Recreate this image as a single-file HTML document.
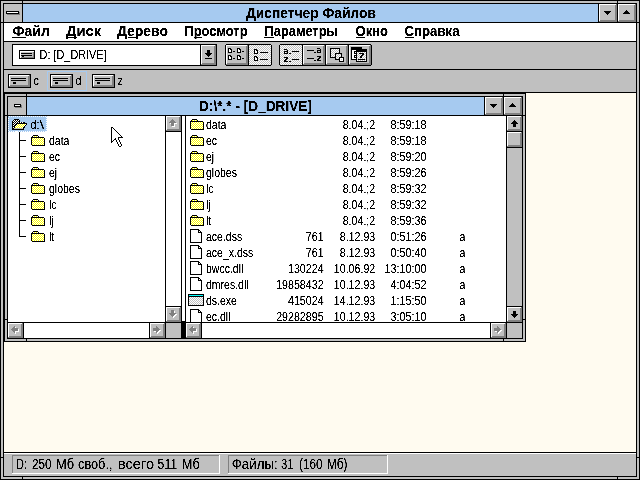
<!DOCTYPE html>
<html lang="ru"><head><meta charset="utf-8"><title>Диспетчер Файлов</title>
<style>
html,body{margin:0;padding:0;background:#000;overflow:hidden}
svg{display:block;will-change:transform;font-family:"Liberation Sans",sans-serif}
</style></head><body>
<svg width="640" height="480" viewBox="0 0 640 480" shape-rendering="crispEdges">
<defs>
<pattern id="dg" width="2" height="2" patternUnits="userSpaceOnUse"><rect width="2" height="2" fill="#FFF"/><rect width="1" height="1" fill="#C0C0C0"/><rect x="1" y="1" width="1" height="1" fill="#C0C0C0"/></pattern>
<pattern id="dy" width="2" height="2" patternUnits="userSpaceOnUse"><rect width="2" height="2" fill="#FFF"/><rect width="1" height="1" fill="#FFFF00"/><rect x="1" y="1" width="1" height="1" fill="#FFFF00"/></pattern>
<filter id="th" x="0" y="0" width="640" height="480" filterUnits="userSpaceOnUse" color-interpolation-filters="sRGB"><feComponentTransfer><feFuncA type="linear" slope="4" intercept="-1.2"/></feComponentTransfer></filter>
</defs>
<rect x="0" y="0" width="640" height="480" fill="#000"/>
<rect x="1" y="1" width="638" height="478" fill="#C0C0C0"/>
<rect x="3" y="3" width="634" height="474" fill="#000"/>
<rect x="22" y="1" width="1" height="2" fill="#000"/>
<rect x="22" y="477" width="1" height="2" fill="#000"/>
<rect x="617" y="1" width="1" height="2" fill="#000"/>
<rect x="617" y="477" width="1" height="2" fill="#000"/>
<rect x="1" y="22" width="2" height="1" fill="#000"/>
<rect x="637" y="22" width="2" height="1" fill="#000"/>
<rect x="1" y="457" width="2" height="1" fill="#000"/>
<rect x="637" y="457" width="2" height="1" fill="#000"/>
<rect x="4" y="4" width="632" height="472" fill="#C0C0C0"/>
<rect x="4" y="4" width="18" height="18" fill="#C0C0C0"/>
<rect x="22" y="4" width="1" height="18" fill="#000"/>
<rect x="23" y="4" width="575" height="18" fill="#A6CAF0"/>
<rect x="598" y="4" width="1" height="18" fill="#000"/>
<rect x="599" y="4" width="18" height="18" fill="#C0C0C0"/>
<rect x="599" y="4" width="17" height="1" fill="#FFF"/>
<rect x="599" y="4" width="1" height="17" fill="#FFF"/>
<rect x="599" y="21" width="18" height="1" fill="#808080"/>
<rect x="616" y="4" width="1" height="18" fill="#808080"/>
<rect x="600" y="20" width="17" height="1" fill="#808080"/>
<rect x="615" y="5" width="1" height="17" fill="#808080"/>
<rect x="599" y="4" width="1" height="1" fill="#FFF"/>
<rect x="617" y="4" width="1" height="18" fill="#000"/>
<rect x="618" y="4" width="18" height="18" fill="#C0C0C0"/>
<rect x="618" y="4" width="17" height="1" fill="#FFF"/>
<rect x="618" y="4" width="1" height="17" fill="#FFF"/>
<rect x="618" y="21" width="18" height="1" fill="#808080"/>
<rect x="635" y="4" width="1" height="18" fill="#808080"/>
<rect x="619" y="20" width="17" height="1" fill="#808080"/>
<rect x="634" y="5" width="1" height="17" fill="#808080"/>
<rect x="618" y="4" width="1" height="1" fill="#FFF"/>
<rect x="604" y="11" width="7" height="1" fill="#000"/>
<rect x="605" y="12" width="5" height="1" fill="#000"/>
<rect x="606" y="13" width="3" height="1" fill="#000"/>
<rect x="607" y="14" width="1" height="1" fill="#000"/>
<rect x="626" y="10" width="1" height="1" fill="#000"/>
<rect x="625" y="11" width="3" height="1" fill="#000"/>
<rect x="624" y="12" width="5" height="1" fill="#000"/>
<rect x="623" y="13" width="7" height="1" fill="#000"/>
<rect x="4" y="22" width="632" height="1" fill="#000"/>
<rect x="7" y="12" width="13" height="3" fill="#808080"/>
<rect x="6" y="11" width="13" height="3" fill="#000"/>
<rect x="7" y="12" width="11" height="1" fill="#FFF"/>
<rect x="4" y="23" width="632" height="18" fill="#FFF"/>
<rect x="4" y="41" width="632" height="1" fill="#000"/>
<rect x="4" y="42" width="632" height="27" fill="#C0C0C0"/>
<rect x="4" y="69" width="632" height="1" fill="#000"/>
<rect x="4" y="70" width="632" height="22" fill="#C0C0C0"/>
<rect x="4" y="92" width="632" height="1" fill="#000"/>
<rect x="4" y="93" width="632" height="359" fill="#FFFBF0"/>
<rect x="4" y="452" width="632" height="1" fill="#000"/>
<rect x="4" y="453" width="632" height="1" fill="#FFF"/>
<rect x="4" y="454" width="632" height="22" fill="#C0C0C0"/>
<rect x="12" y="37" width="14" height="1" fill="#000"/>
<rect x="66" y="37" width="11" height="1" fill="#000"/>
<rect x="128" y="37" width="8" height="1" fill="#000"/>
<rect x="194" y="37" width="8" height="1" fill="#000"/>
<rect x="264" y="37" width="10" height="1" fill="#000"/>
<rect x="356" y="37" width="9" height="1" fill="#000"/>
<rect x="405" y="37" width="9" height="1" fill="#000"/>
<rect x="12" y="44" width="205" height="22" fill="#000"/>
<rect x="13" y="45" width="187" height="20" fill="#FFF"/>
<rect x="201" y="45" width="15" height="20" fill="#C0C0C0"/>
<rect x="201" y="45" width="14" height="1" fill="#FFF"/>
<rect x="201" y="45" width="1" height="19" fill="#FFF"/>
<rect x="201" y="64" width="15" height="1" fill="#808080"/>
<rect x="215" y="45" width="1" height="20" fill="#808080"/>
<rect x="202" y="63" width="14" height="1" fill="#808080"/>
<rect x="214" y="46" width="1" height="19" fill="#808080"/>
<rect x="201" y="45" width="1" height="1" fill="#FFF"/>
<rect x="207" y="50" width="3" height="3" fill="#000"/>
<rect x="205" y="53" width="7" height="1" fill="#000"/>
<rect x="206" y="54" width="5" height="1" fill="#000"/>
<rect x="207" y="55" width="3" height="1" fill="#000"/>
<rect x="208" y="56" width="1" height="1" fill="#000"/>
<rect x="205" y="58" width="7" height="1" fill="#000"/>
<rect x="19" y="50" width="16" height="9" fill="#000"/>
<rect x="20" y="51" width="14" height="7" fill="#C0C0C0"/>
<rect x="20" y="51" width="14" height="1" fill="#FFF"/>
<rect x="20" y="51" width="1" height="7" fill="#FFF"/>
<rect x="21" y="57" width="13" height="1" fill="#808080"/>
<rect x="33" y="52" width="1" height="6" fill="#808080"/>
<rect x="21" y="53" width="11" height="1" fill="#000"/>
<rect x="21" y="55" width="11" height="1" fill="#000"/>
<rect x="22" y="56" width="2" height="1" fill="#000"/>
<g id="tb">
<rect x="225" y="44" width="24" height="22" fill="#000"/>
<rect x="226" y="45" width="22" height="20" fill="#C0C0C0"/>
<rect x="226" y="45" width="21" height="1" fill="#FFF"/>
<rect x="226" y="45" width="1" height="19" fill="#FFF"/>
<rect x="226" y="64" width="22" height="1" fill="#808080"/>
<rect x="247" y="45" width="1" height="20" fill="#808080"/>
<rect x="227" y="63" width="21" height="1" fill="#808080"/>
<rect x="246" y="46" width="1" height="19" fill="#808080"/>
<rect x="226" y="45" width="1" height="1" fill="#FFF"/>
<rect x="248" y="44" width="24" height="22" fill="#000"/>
<rect x="249" y="45" width="22" height="20" fill="url(#dg)"/>
<rect x="279" y="44" width="24" height="22" fill="#000"/>
<rect x="280" y="45" width="22" height="20" fill="url(#dg)"/>
<rect x="302" y="44" width="24" height="22" fill="#000"/>
<rect x="303" y="45" width="22" height="20" fill="#C0C0C0"/>
<rect x="303" y="45" width="21" height="1" fill="#FFF"/>
<rect x="303" y="45" width="1" height="19" fill="#FFF"/>
<rect x="303" y="64" width="22" height="1" fill="#808080"/>
<rect x="324" y="45" width="1" height="20" fill="#808080"/>
<rect x="304" y="63" width="21" height="1" fill="#808080"/>
<rect x="323" y="46" width="1" height="19" fill="#808080"/>
<rect x="303" y="45" width="1" height="1" fill="#FFF"/>
<rect x="325" y="44" width="24" height="22" fill="#000"/>
<rect x="326" y="45" width="22" height="20" fill="#C0C0C0"/>
<rect x="326" y="45" width="21" height="1" fill="#FFF"/>
<rect x="326" y="45" width="1" height="19" fill="#FFF"/>
<rect x="326" y="64" width="22" height="1" fill="#808080"/>
<rect x="347" y="45" width="1" height="20" fill="#808080"/>
<rect x="327" y="63" width="21" height="1" fill="#808080"/>
<rect x="346" y="46" width="1" height="19" fill="#808080"/>
<rect x="326" y="45" width="1" height="1" fill="#FFF"/>
<rect x="348" y="44" width="24" height="22" fill="#000"/>
<rect x="349" y="45" width="22" height="20" fill="#C0C0C0"/>
<rect x="349" y="45" width="21" height="1" fill="#FFF"/>
<rect x="349" y="45" width="1" height="19" fill="#FFF"/>
<rect x="349" y="64" width="22" height="1" fill="#808080"/>
<rect x="370" y="45" width="1" height="20" fill="#808080"/>
<rect x="350" y="63" width="21" height="1" fill="#808080"/>
<rect x="369" y="46" width="1" height="19" fill="#808080"/>
<rect x="349" y="45" width="1" height="1" fill="#FFF"/>
<rect x="225" y="44" width="1" height="1" fill="#C0C0C0"/>
<rect x="271" y="44" width="1" height="1" fill="#C0C0C0"/>
<rect x="225" y="65" width="1" height="1" fill="#C0C0C0"/>
<rect x="271" y="65" width="1" height="1" fill="#C0C0C0"/>
<rect x="279" y="44" width="1" height="1" fill="#C0C0C0"/>
<rect x="371" y="44" width="1" height="1" fill="#C0C0C0"/>
<rect x="279" y="65" width="1" height="1" fill="#C0C0C0"/>
<rect x="371" y="65" width="1" height="1" fill="#C0C0C0"/>
<rect x="228" y="48" width="3" height="1" fill="#000"/>
<rect x="228" y="49" width="1" height="1" fill="#000"/>
<rect x="229" y="49" width="1" height="1" fill="#FFF"/>
<rect x="230" y="49" width="2" height="1" fill="#000"/>
<rect x="228" y="50" width="1" height="1" fill="#000"/>
<rect x="229" y="50" width="2" height="1" fill="#FFF"/>
<rect x="231" y="50" width="1" height="1" fill="#000"/>
<rect x="228" y="51" width="1" height="1" fill="#000"/>
<rect x="229" y="51" width="2" height="1" fill="#FFF"/>
<rect x="231" y="51" width="1" height="1" fill="#000"/>
<rect x="228" y="52" width="4" height="1" fill="#000"/>
<rect x="233" y="51" width="2" height="1" fill="#000"/>
<rect x="237" y="48" width="3" height="1" fill="#000"/>
<rect x="237" y="49" width="1" height="1" fill="#000"/>
<rect x="238" y="49" width="1" height="1" fill="#FFF"/>
<rect x="239" y="49" width="2" height="1" fill="#000"/>
<rect x="237" y="50" width="1" height="1" fill="#000"/>
<rect x="238" y="50" width="2" height="1" fill="#FFF"/>
<rect x="240" y="50" width="1" height="1" fill="#000"/>
<rect x="237" y="51" width="1" height="1" fill="#000"/>
<rect x="238" y="51" width="2" height="1" fill="#FFF"/>
<rect x="240" y="51" width="1" height="1" fill="#000"/>
<rect x="237" y="52" width="4" height="1" fill="#000"/>
<rect x="242" y="51" width="2" height="1" fill="#000"/>
<rect x="228" y="55" width="3" height="1" fill="#000"/>
<rect x="228" y="56" width="1" height="1" fill="#000"/>
<rect x="229" y="56" width="1" height="1" fill="#FFF"/>
<rect x="230" y="56" width="2" height="1" fill="#000"/>
<rect x="228" y="57" width="1" height="1" fill="#000"/>
<rect x="229" y="57" width="2" height="1" fill="#FFF"/>
<rect x="231" y="57" width="1" height="1" fill="#000"/>
<rect x="228" y="58" width="1" height="1" fill="#000"/>
<rect x="229" y="58" width="2" height="1" fill="#FFF"/>
<rect x="231" y="58" width="1" height="1" fill="#000"/>
<rect x="228" y="59" width="4" height="1" fill="#000"/>
<rect x="233" y="58" width="2" height="1" fill="#000"/>
<rect x="237" y="55" width="3" height="1" fill="#000"/>
<rect x="237" y="56" width="1" height="1" fill="#000"/>
<rect x="238" y="56" width="1" height="1" fill="#FFF"/>
<rect x="239" y="56" width="2" height="1" fill="#000"/>
<rect x="237" y="57" width="1" height="1" fill="#000"/>
<rect x="238" y="57" width="2" height="1" fill="#FFF"/>
<rect x="240" y="57" width="1" height="1" fill="#000"/>
<rect x="237" y="58" width="1" height="1" fill="#000"/>
<rect x="238" y="58" width="2" height="1" fill="#FFF"/>
<rect x="240" y="58" width="1" height="1" fill="#000"/>
<rect x="237" y="59" width="4" height="1" fill="#000"/>
<rect x="242" y="58" width="2" height="1" fill="#000"/>
<rect x="254" y="49" width="3" height="1" fill="#000"/>
<rect x="254" y="50" width="1" height="1" fill="#000"/>
<rect x="255" y="50" width="1" height="1" fill="#FFF"/>
<rect x="256" y="50" width="2" height="1" fill="#000"/>
<rect x="254" y="51" width="1" height="1" fill="#000"/>
<rect x="255" y="51" width="2" height="1" fill="#FFF"/>
<rect x="257" y="51" width="1" height="1" fill="#000"/>
<rect x="254" y="52" width="1" height="1" fill="#000"/>
<rect x="255" y="52" width="2" height="1" fill="#FFF"/>
<rect x="257" y="52" width="1" height="1" fill="#000"/>
<rect x="254" y="53" width="4" height="1" fill="#000"/>
<rect x="260" y="52" width="8" height="1" fill="#000"/>
<rect x="254" y="56" width="3" height="1" fill="#000"/>
<rect x="254" y="57" width="1" height="1" fill="#000"/>
<rect x="255" y="57" width="1" height="1" fill="#FFF"/>
<rect x="256" y="57" width="2" height="1" fill="#000"/>
<rect x="254" y="58" width="1" height="1" fill="#000"/>
<rect x="255" y="58" width="2" height="1" fill="#FFF"/>
<rect x="257" y="58" width="1" height="1" fill="#000"/>
<rect x="254" y="59" width="1" height="1" fill="#000"/>
<rect x="255" y="59" width="2" height="1" fill="#FFF"/>
<rect x="257" y="59" width="1" height="1" fill="#000"/>
<rect x="254" y="60" width="4" height="1" fill="#000"/>
<rect x="260" y="59" width="8" height="1" fill="#000"/>
<rect x="284" y="49" width="3" height="1" fill="#000"/>
<rect x="287" y="50" width="1" height="1" fill="#000"/>
<rect x="284" y="51" width="4" height="1" fill="#000"/>
<rect x="284" y="52" width="1" height="1" fill="#000"/>
<rect x="287" y="52" width="1" height="1" fill="#000"/>
<rect x="284" y="53" width="4" height="1" fill="#000"/>
<rect x="289" y="53" width="2" height="1" fill="#000"/>
<rect x="292" y="51" width="7" height="1" fill="#000"/>
<rect x="284" y="57" width="4" height="1" fill="#000"/>
<rect x="286" y="58" width="2" height="1" fill="#000"/>
<rect x="285" y="59" width="2" height="1" fill="#000"/>
<rect x="284" y="60" width="2" height="1" fill="#000"/>
<rect x="284" y="61" width="4" height="1" fill="#000"/>
<rect x="289" y="61" width="2" height="1" fill="#000"/>
<rect x="292" y="59" width="7" height="1" fill="#000"/>
<rect x="307" y="50" width="7" height="1" fill="#000"/>
<rect x="314" y="52" width="2" height="1" fill="#000"/>
<rect x="317" y="48" width="3" height="1" fill="#000"/>
<rect x="320" y="49" width="1" height="1" fill="#000"/>
<rect x="317" y="50" width="4" height="1" fill="#000"/>
<rect x="317" y="51" width="1" height="1" fill="#000"/>
<rect x="320" y="51" width="1" height="1" fill="#000"/>
<rect x="317" y="52" width="4" height="1" fill="#000"/>
<rect x="307" y="58" width="7" height="1" fill="#000"/>
<rect x="314" y="60" width="2" height="1" fill="#000"/>
<rect x="317" y="56" width="4" height="1" fill="#000"/>
<rect x="319" y="57" width="2" height="1" fill="#000"/>
<rect x="318" y="58" width="2" height="1" fill="#000"/>
<rect x="317" y="59" width="2" height="1" fill="#000"/>
<rect x="317" y="60" width="4" height="1" fill="#000"/>
<rect x="330" y="48" width="10" height="10" fill="#000"/>
<rect x="331" y="49" width="8" height="8" fill="url(#dg)"/>
<rect x="335" y="53" width="7" height="7" fill="#000"/>
<rect x="336" y="54" width="5" height="5" fill="url(#dg)"/>
<rect x="339" y="57" width="5" height="5" fill="#000"/>
<rect x="340" y="58" width="3" height="3" fill="#FFF"/>
<rect x="341" y="59" width="1" height="1" fill="#C0C0C0"/>
<rect x="351" y="47" width="11" height="13" fill="#000"/>
<rect x="352" y="50" width="4" height="9" fill="#FFF"/>
<rect x="354" y="51" width="2" height="3" fill="#000"/>
<rect x="354" y="55" width="2" height="3" fill="#000"/>
<rect x="355" y="52" width="1" height="1" fill="#FFF"/>
<rect x="355" y="56" width="1" height="1" fill="#FFF"/>
<rect x="356" y="49" width="11" height="13" fill="#000"/>
<rect x="357" y="52" width="9" height="9" fill="url(#dg)"/>
<rect x="359" y="53" width="5" height="1" fill="#000"/>
<rect x="362" y="54" width="2" height="1" fill="#000"/>
<rect x="361" y="55" width="2" height="1" fill="#000"/>
<rect x="360" y="56" width="2" height="1" fill="#000"/>
<rect x="360" y="57" width="2" height="1" fill="#000"/>
<rect x="358" y="59" width="7" height="1" fill="#000"/>
</g>
<rect x="8" y="74" width="23" height="14" fill="#000"/>
<rect x="9" y="75" width="21" height="12" fill="#C0C0C0"/>
<rect x="9" y="75" width="20" height="1" fill="#FFF"/>
<rect x="9" y="75" width="1" height="11" fill="#FFF"/>
<rect x="9" y="86" width="21" height="1" fill="#808080"/>
<rect x="29" y="75" width="1" height="12" fill="#808080"/>
<rect x="10" y="85" width="20" height="1" fill="#808080"/>
<rect x="28" y="76" width="1" height="11" fill="#808080"/>
<rect x="11" y="78" width="15" height="1" fill="#000"/>
<rect x="11" y="80" width="15" height="1" fill="#000"/>
<rect x="13" y="82" width="3" height="2" fill="#000"/>
<rect x="50" y="74" width="23" height="14" fill="#000"/>
<rect x="51" y="75" width="21" height="12" fill="#C0C0C0"/>
<rect x="51" y="75" width="20" height="1" fill="#FFF"/>
<rect x="51" y="75" width="1" height="11" fill="#FFF"/>
<rect x="51" y="86" width="21" height="1" fill="#808080"/>
<rect x="71" y="75" width="1" height="12" fill="#808080"/>
<rect x="52" y="85" width="20" height="1" fill="#808080"/>
<rect x="70" y="76" width="1" height="11" fill="#808080"/>
<rect x="53" y="78" width="15" height="1" fill="#000"/>
<rect x="53" y="80" width="15" height="1" fill="#000"/>
<rect x="55" y="82" width="3" height="2" fill="#000"/>
<rect x="92" y="74" width="23" height="14" fill="#000"/>
<rect x="93" y="75" width="21" height="12" fill="#C0C0C0"/>
<rect x="93" y="75" width="20" height="1" fill="#FFF"/>
<rect x="93" y="75" width="1" height="11" fill="#FFF"/>
<rect x="93" y="86" width="21" height="1" fill="#808080"/>
<rect x="113" y="75" width="1" height="12" fill="#808080"/>
<rect x="94" y="85" width="20" height="1" fill="#808080"/>
<rect x="112" y="76" width="1" height="11" fill="#808080"/>
<rect x="95" y="78" width="15" height="1" fill="#000"/>
<rect x="95" y="80" width="15" height="1" fill="#000"/>
<rect x="97" y="82" width="3" height="2" fill="#000"/>
<rect x="47.5" y="71.5" width="39" height="19" fill="none" stroke="#A6CAF0" stroke-width="1"/>
<rect x="4" y="93" width="522" height="249" fill="#000"/>
<rect x="5" y="94" width="520" height="247" fill="#C0C0C0"/>
<rect x="7" y="96" width="516" height="243" fill="#000"/>
<rect x="26" y="94" width="1" height="2" fill="#000"/>
<rect x="26" y="339" width="1" height="2" fill="#000"/>
<rect x="503" y="94" width="1" height="2" fill="#000"/>
<rect x="503" y="339" width="1" height="2" fill="#000"/>
<rect x="5" y="115" width="2" height="1" fill="#000"/>
<rect x="523" y="115" width="2" height="1" fill="#000"/>
<rect x="5" y="319" width="2" height="1" fill="#000"/>
<rect x="523" y="319" width="2" height="1" fill="#000"/>
<rect x="8" y="97" width="514" height="241" fill="#FFF"/>
<rect x="8" y="97" width="18" height="18" fill="#C0C0C0"/>
<rect x="26" y="97" width="1" height="18" fill="#000"/>
<rect x="27" y="97" width="457" height="18" fill="#A6CAF0"/>
<rect x="484" y="97" width="1" height="18" fill="#000"/>
<rect x="485" y="97" width="18" height="18" fill="#C0C0C0"/>
<rect x="485" y="97" width="17" height="1" fill="#FFF"/>
<rect x="485" y="97" width="1" height="17" fill="#FFF"/>
<rect x="485" y="114" width="18" height="1" fill="#808080"/>
<rect x="502" y="97" width="1" height="18" fill="#808080"/>
<rect x="486" y="113" width="17" height="1" fill="#808080"/>
<rect x="501" y="98" width="1" height="17" fill="#808080"/>
<rect x="485" y="97" width="1" height="1" fill="#FFF"/>
<rect x="503" y="97" width="1" height="18" fill="#000"/>
<rect x="504" y="97" width="18" height="18" fill="#C0C0C0"/>
<rect x="504" y="97" width="17" height="1" fill="#FFF"/>
<rect x="504" y="97" width="1" height="17" fill="#FFF"/>
<rect x="504" y="114" width="18" height="1" fill="#808080"/>
<rect x="521" y="97" width="1" height="18" fill="#808080"/>
<rect x="505" y="113" width="17" height="1" fill="#808080"/>
<rect x="520" y="98" width="1" height="17" fill="#808080"/>
<rect x="504" y="97" width="1" height="1" fill="#FFF"/>
<rect x="490" y="104" width="7" height="1" fill="#000"/>
<rect x="491" y="105" width="5" height="1" fill="#000"/>
<rect x="492" y="106" width="3" height="1" fill="#000"/>
<rect x="493" y="107" width="1" height="1" fill="#000"/>
<rect x="512" y="103" width="1" height="1" fill="#000"/>
<rect x="511" y="104" width="3" height="1" fill="#000"/>
<rect x="510" y="105" width="5" height="1" fill="#000"/>
<rect x="509" y="106" width="7" height="1" fill="#000"/>
<rect x="8" y="115" width="514" height="1" fill="#000"/>
<rect x="15" y="105" width="7" height="3" fill="#808080"/>
<rect x="14" y="104" width="7" height="3" fill="#000"/>
<rect x="15" y="105" width="5" height="1" fill="#FFF"/>
<rect x="165" y="116" width="1" height="222" fill="#000"/>
<rect x="181" y="116" width="1" height="222" fill="#000"/>
<rect x="185" y="116" width="1" height="222" fill="#000"/>
<rect x="181" y="321" width="5" height="17" fill="#000"/>
<rect x="506" y="116" width="1" height="222" fill="#000"/>
<rect x="8" y="322" width="514" height="1" fill="#000"/>
<rect x="166" y="116" width="15" height="15" fill="#C0C0C0"/>
<rect x="166" y="116" width="14" height="1" fill="#FFF"/>
<rect x="166" y="116" width="1" height="14" fill="#FFF"/>
<rect x="166" y="130" width="15" height="1" fill="#808080"/>
<rect x="180" y="116" width="1" height="15" fill="#808080"/>
<rect x="167" y="129" width="14" height="1" fill="#808080"/>
<rect x="179" y="117" width="1" height="14" fill="#808080"/>
<rect x="166" y="116" width="1" height="1" fill="#FFF"/>
<rect x="173" y="120" width="1" height="1" fill="#FFF"/>
<rect x="172" y="121" width="3" height="1" fill="#FFF"/>
<rect x="171" y="122" width="5" height="1" fill="#FFF"/>
<rect x="170" y="123" width="7" height="1" fill="#FFF"/>
<rect x="172" y="124" width="3" height="3" fill="#FFF"/>
<rect x="172" y="119" width="1" height="1" fill="#808080"/>
<rect x="171" y="120" width="3" height="1" fill="#808080"/>
<rect x="170" y="121" width="5" height="1" fill="#808080"/>
<rect x="169" y="122" width="7" height="1" fill="#808080"/>
<rect x="171" y="123" width="3" height="3" fill="#808080"/>
<rect x="166" y="131" width="15" height="1" fill="#000"/>
<rect x="166" y="306" width="15" height="1" fill="#000"/>
<rect x="166" y="307" width="15" height="15" fill="#C0C0C0"/>
<rect x="166" y="307" width="14" height="1" fill="#FFF"/>
<rect x="166" y="307" width="1" height="14" fill="#FFF"/>
<rect x="166" y="321" width="15" height="1" fill="#808080"/>
<rect x="180" y="307" width="1" height="15" fill="#808080"/>
<rect x="167" y="320" width="14" height="1" fill="#808080"/>
<rect x="179" y="308" width="1" height="14" fill="#808080"/>
<rect x="166" y="307" width="1" height="1" fill="#FFF"/>
<rect x="172" y="311" width="3" height="3" fill="#FFF"/>
<rect x="170" y="314" width="7" height="1" fill="#FFF"/>
<rect x="171" y="315" width="5" height="1" fill="#FFF"/>
<rect x="172" y="316" width="3" height="1" fill="#FFF"/>
<rect x="173" y="317" width="1" height="1" fill="#FFF"/>
<rect x="171" y="310" width="3" height="3" fill="#808080"/>
<rect x="169" y="313" width="7" height="1" fill="#808080"/>
<rect x="170" y="314" width="5" height="1" fill="#808080"/>
<rect x="171" y="315" width="3" height="1" fill="#808080"/>
<rect x="172" y="316" width="1" height="1" fill="#808080"/>
<rect x="166" y="323" width="15" height="15" fill="#C0C0C0"/>
<rect x="8" y="323" width="15" height="15" fill="#C0C0C0"/>
<rect x="8" y="323" width="14" height="1" fill="#FFF"/>
<rect x="8" y="323" width="1" height="14" fill="#FFF"/>
<rect x="8" y="337" width="15" height="1" fill="#808080"/>
<rect x="22" y="323" width="1" height="15" fill="#808080"/>
<rect x="9" y="336" width="14" height="1" fill="#808080"/>
<rect x="21" y="324" width="1" height="14" fill="#808080"/>
<rect x="8" y="323" width="1" height="1" fill="#FFF"/>
<rect x="12" y="330" width="1" height="1" fill="#FFF"/>
<rect x="13" y="329" width="1" height="3" fill="#FFF"/>
<rect x="14" y="328" width="1" height="5" fill="#FFF"/>
<rect x="15" y="327" width="1" height="7" fill="#FFF"/>
<rect x="16" y="329" width="3" height="3" fill="#FFF"/>
<rect x="11" y="329" width="1" height="1" fill="#808080"/>
<rect x="12" y="328" width="1" height="3" fill="#808080"/>
<rect x="13" y="327" width="1" height="5" fill="#808080"/>
<rect x="14" y="326" width="1" height="7" fill="#808080"/>
<rect x="15" y="328" width="3" height="3" fill="#808080"/>
<rect x="23" y="323" width="1" height="15" fill="#000"/>
<rect x="149" y="323" width="1" height="15" fill="#000"/>
<rect x="150" y="323" width="15" height="15" fill="#C0C0C0"/>
<rect x="150" y="323" width="14" height="1" fill="#FFF"/>
<rect x="150" y="323" width="1" height="14" fill="#FFF"/>
<rect x="150" y="337" width="15" height="1" fill="#808080"/>
<rect x="164" y="323" width="1" height="15" fill="#808080"/>
<rect x="151" y="336" width="14" height="1" fill="#808080"/>
<rect x="163" y="324" width="1" height="14" fill="#808080"/>
<rect x="150" y="323" width="1" height="1" fill="#FFF"/>
<rect x="154" y="329" width="3" height="3" fill="#FFF"/>
<rect x="157" y="327" width="1" height="7" fill="#FFF"/>
<rect x="158" y="328" width="1" height="5" fill="#FFF"/>
<rect x="159" y="329" width="1" height="3" fill="#FFF"/>
<rect x="160" y="330" width="1" height="1" fill="#FFF"/>
<rect x="153" y="328" width="3" height="3" fill="#808080"/>
<rect x="156" y="326" width="1" height="7" fill="#808080"/>
<rect x="157" y="327" width="1" height="5" fill="#808080"/>
<rect x="158" y="328" width="1" height="3" fill="#808080"/>
<rect x="159" y="329" width="1" height="1" fill="#808080"/>
<rect x="507" y="116" width="15" height="206" fill="#C0C0C0"/>
<rect x="507" y="116" width="15" height="15" fill="#C0C0C0"/>
<rect x="507" y="116" width="14" height="1" fill="#FFF"/>
<rect x="507" y="116" width="1" height="14" fill="#FFF"/>
<rect x="507" y="130" width="15" height="1" fill="#808080"/>
<rect x="521" y="116" width="1" height="15" fill="#808080"/>
<rect x="508" y="129" width="14" height="1" fill="#808080"/>
<rect x="520" y="117" width="1" height="14" fill="#808080"/>
<rect x="507" y="116" width="1" height="1" fill="#FFF"/>
<rect x="514" y="120" width="1" height="1" fill="#000"/>
<rect x="513" y="121" width="3" height="1" fill="#000"/>
<rect x="512" y="122" width="5" height="1" fill="#000"/>
<rect x="511" y="123" width="7" height="1" fill="#000"/>
<rect x="513" y="124" width="3" height="3" fill="#000"/>
<rect x="507" y="131" width="15" height="1" fill="#000"/>
<rect x="507" y="132" width="15" height="15" fill="#C0C0C0"/>
<rect x="507" y="132" width="14" height="1" fill="#FFF"/>
<rect x="507" y="132" width="1" height="14" fill="#FFF"/>
<rect x="507" y="146" width="15" height="1" fill="#808080"/>
<rect x="521" y="132" width="1" height="15" fill="#808080"/>
<rect x="508" y="145" width="14" height="1" fill="#808080"/>
<rect x="520" y="133" width="1" height="14" fill="#808080"/>
<rect x="507" y="132" width="1" height="1" fill="#FFF"/>
<rect x="507" y="147" width="15" height="1" fill="#000"/>
<rect x="507" y="306" width="15" height="1" fill="#000"/>
<rect x="507" y="307" width="15" height="15" fill="#C0C0C0"/>
<rect x="507" y="307" width="14" height="1" fill="#FFF"/>
<rect x="507" y="307" width="1" height="14" fill="#FFF"/>
<rect x="507" y="321" width="15" height="1" fill="#808080"/>
<rect x="521" y="307" width="1" height="15" fill="#808080"/>
<rect x="508" y="320" width="14" height="1" fill="#808080"/>
<rect x="520" y="308" width="1" height="14" fill="#808080"/>
<rect x="507" y="307" width="1" height="1" fill="#FFF"/>
<rect x="513" y="311" width="3" height="3" fill="#000"/>
<rect x="511" y="314" width="7" height="1" fill="#000"/>
<rect x="512" y="315" width="5" height="1" fill="#000"/>
<rect x="513" y="316" width="3" height="1" fill="#000"/>
<rect x="514" y="317" width="1" height="1" fill="#000"/>
<rect x="507" y="323" width="15" height="15" fill="#C0C0C0"/>
<rect x="186" y="323" width="15" height="15" fill="#C0C0C0"/>
<rect x="186" y="323" width="14" height="1" fill="#FFF"/>
<rect x="186" y="323" width="1" height="14" fill="#FFF"/>
<rect x="186" y="337" width="15" height="1" fill="#808080"/>
<rect x="200" y="323" width="1" height="15" fill="#808080"/>
<rect x="187" y="336" width="14" height="1" fill="#808080"/>
<rect x="199" y="324" width="1" height="14" fill="#808080"/>
<rect x="186" y="323" width="1" height="1" fill="#FFF"/>
<rect x="190" y="330" width="1" height="1" fill="#FFF"/>
<rect x="191" y="329" width="1" height="3" fill="#FFF"/>
<rect x="192" y="328" width="1" height="5" fill="#FFF"/>
<rect x="193" y="327" width="1" height="7" fill="#FFF"/>
<rect x="194" y="329" width="3" height="3" fill="#FFF"/>
<rect x="189" y="329" width="1" height="1" fill="#808080"/>
<rect x="190" y="328" width="1" height="3" fill="#808080"/>
<rect x="191" y="327" width="1" height="5" fill="#808080"/>
<rect x="192" y="326" width="1" height="7" fill="#808080"/>
<rect x="193" y="328" width="3" height="3" fill="#808080"/>
<rect x="201" y="323" width="1" height="15" fill="#000"/>
<rect x="490" y="323" width="1" height="15" fill="#000"/>
<rect x="491" y="323" width="15" height="15" fill="#C0C0C0"/>
<rect x="491" y="323" width="14" height="1" fill="#FFF"/>
<rect x="491" y="323" width="1" height="14" fill="#FFF"/>
<rect x="491" y="337" width="15" height="1" fill="#808080"/>
<rect x="505" y="323" width="1" height="15" fill="#808080"/>
<rect x="492" y="336" width="14" height="1" fill="#808080"/>
<rect x="504" y="324" width="1" height="14" fill="#808080"/>
<rect x="491" y="323" width="1" height="1" fill="#FFF"/>
<rect x="495" y="329" width="3" height="3" fill="#FFF"/>
<rect x="498" y="327" width="1" height="7" fill="#FFF"/>
<rect x="499" y="328" width="1" height="5" fill="#FFF"/>
<rect x="500" y="329" width="1" height="3" fill="#FFF"/>
<rect x="501" y="330" width="1" height="1" fill="#FFF"/>
<rect x="494" y="328" width="3" height="3" fill="#808080"/>
<rect x="497" y="326" width="1" height="7" fill="#808080"/>
<rect x="498" y="327" width="1" height="5" fill="#808080"/>
<rect x="499" y="328" width="1" height="3" fill="#808080"/>
<rect x="500" y="329" width="1" height="1" fill="#808080"/>
<rect x="8" y="116" width="39" height="16" fill="#A6CAF0"/>
<rect x="8.5" y="116.5" width="38" height="15" fill="none" stroke="#FFF" stroke-width="1" stroke-dasharray="1 1"/>
<rect x="14" y="119" width="5" height="1" fill="#000"/>
<rect x="13" y="120" width="1" height="1" fill="#000"/>
<rect x="14" y="120" width="1" height="1" fill="#FFF"/>
<rect x="15" y="120" width="1" height="1" fill="#000"/>
<rect x="16" y="120" width="1" height="1" fill="#FFF"/>
<rect x="17" y="120" width="1" height="1" fill="#000"/>
<rect x="18" y="120" width="1" height="1" fill="#FFF"/>
<rect x="19" y="120" width="1" height="1" fill="#000"/>
<rect x="12" y="121" width="1" height="1" fill="#000"/>
<rect x="13" y="121" width="1" height="1" fill="#FFF"/>
<rect x="14" y="121" width="1" height="1" fill="#000"/>
<rect x="15" y="121" width="1" height="1" fill="#FFF"/>
<rect x="16" y="121" width="1" height="1" fill="#000"/>
<rect x="17" y="121" width="1" height="1" fill="#FFF"/>
<rect x="18" y="121" width="2" height="1" fill="#000"/>
<rect x="12" y="122" width="2" height="1" fill="#000"/>
<rect x="14" y="122" width="1" height="1" fill="#FFF"/>
<rect x="15" y="122" width="1" height="1" fill="#000"/>
<rect x="16" y="122" width="1" height="1" fill="#FFF"/>
<rect x="17" y="122" width="1" height="1" fill="#000"/>
<rect x="18" y="122" width="1" height="1" fill="#FFF"/>
<rect x="19" y="122" width="1" height="1" fill="#000"/>
<rect x="20" y="122" width="1" height="1" fill="#FFF"/>
<rect x="21" y="122" width="1" height="1" fill="#000"/>
<rect x="22" y="122" width="1" height="1" fill="#FFF"/>
<rect x="23" y="122" width="2" height="1" fill="#000"/>
<rect x="12" y="123" width="1" height="1" fill="#000"/>
<rect x="13" y="123" width="1" height="1" fill="#FFF"/>
<rect x="14" y="123" width="1" height="1" fill="#000"/>
<rect x="15" y="123" width="1" height="1" fill="#FFF"/>
<rect x="16" y="123" width="11" height="1" fill="#000"/>
<rect x="12" y="124" width="2" height="1" fill="#000"/>
<rect x="14" y="124" width="1" height="1" fill="#FFF"/>
<rect x="15" y="124" width="2" height="1" fill="#000"/>
<rect x="17" y="124" width="9" height="1" fill="url(#dy)"/>
<rect x="26" y="124" width="1" height="1" fill="#000"/>
<rect x="12" y="125" width="1" height="1" fill="#000"/>
<rect x="13" y="125" width="1" height="1" fill="#FFF"/>
<rect x="14" y="125" width="2" height="1" fill="#000"/>
<rect x="16" y="125" width="9" height="1" fill="url(#dy)"/>
<rect x="25" y="125" width="1" height="1" fill="#000"/>
<rect x="12" y="126" width="3" height="1" fill="#000"/>
<rect x="15" y="126" width="9" height="1" fill="url(#dy)"/>
<rect x="24" y="126" width="1" height="1" fill="#000"/>
<rect x="12" y="127" width="1" height="1" fill="#000"/>
<rect x="13" y="127" width="1" height="1" fill="#FFF"/>
<rect x="14" y="127" width="1" height="1" fill="#000"/>
<rect x="15" y="127" width="8" height="1" fill="url(#dy)"/>
<rect x="23" y="127" width="2" height="1" fill="#000"/>
<rect x="12" y="128" width="2" height="1" fill="#000"/>
<rect x="14" y="128" width="9" height="1" fill="#C0C0C0"/>
<rect x="23" y="128" width="1" height="1" fill="#000"/>
<rect x="12" y="129" width="12" height="1" fill="#000"/>
<rect x="19" y="132" width="1" height="105" fill="#000"/>
<rect x="19" y="140" width="7" height="1" fill="#000"/>
<rect x="33" y="135" width="5" height="1" fill="#000"/>
<rect x="32" y="136" width="1" height="1" fill="#000"/>
<rect x="33" y="136" width="5" height="1" fill="url(#dy)"/>
<rect x="38" y="136" width="1" height="1" fill="#000"/>
<rect x="31" y="137" width="13" height="1" fill="#000"/>
<rect x="31" y="138" width="1" height="1" fill="#000"/>
<rect x="32" y="138" width="12" height="1" fill="url(#dy)"/>
<rect x="44" y="138" width="1" height="1" fill="#000"/>
<rect x="31" y="139" width="1" height="1" fill="#000"/>
<rect x="32" y="139" width="12" height="1" fill="url(#dy)"/>
<rect x="44" y="139" width="1" height="1" fill="#000"/>
<rect x="31" y="140" width="1" height="1" fill="#000"/>
<rect x="32" y="140" width="12" height="1" fill="url(#dy)"/>
<rect x="44" y="140" width="1" height="1" fill="#000"/>
<rect x="31" y="141" width="1" height="1" fill="#000"/>
<rect x="32" y="141" width="12" height="1" fill="url(#dy)"/>
<rect x="44" y="141" width="1" height="1" fill="#000"/>
<rect x="31" y="142" width="1" height="1" fill="#000"/>
<rect x="32" y="142" width="12" height="1" fill="url(#dy)"/>
<rect x="44" y="142" width="1" height="1" fill="#000"/>
<rect x="31" y="143" width="1" height="1" fill="#000"/>
<rect x="32" y="143" width="12" height="1" fill="url(#dy)"/>
<rect x="44" y="143" width="1" height="1" fill="#000"/>
<rect x="31" y="144" width="1" height="1" fill="#000"/>
<rect x="32" y="144" width="12" height="1" fill="url(#dy)"/>
<rect x="44" y="144" width="1" height="1" fill="#000"/>
<rect x="32" y="145" width="13" height="1" fill="#000"/>
<rect x="19" y="156" width="7" height="1" fill="#000"/>
<rect x="33" y="151" width="5" height="1" fill="#000"/>
<rect x="32" y="152" width="1" height="1" fill="#000"/>
<rect x="33" y="152" width="5" height="1" fill="url(#dy)"/>
<rect x="38" y="152" width="1" height="1" fill="#000"/>
<rect x="31" y="153" width="13" height="1" fill="#000"/>
<rect x="31" y="154" width="1" height="1" fill="#000"/>
<rect x="32" y="154" width="12" height="1" fill="url(#dy)"/>
<rect x="44" y="154" width="1" height="1" fill="#000"/>
<rect x="31" y="155" width="1" height="1" fill="#000"/>
<rect x="32" y="155" width="12" height="1" fill="url(#dy)"/>
<rect x="44" y="155" width="1" height="1" fill="#000"/>
<rect x="31" y="156" width="1" height="1" fill="#000"/>
<rect x="32" y="156" width="12" height="1" fill="url(#dy)"/>
<rect x="44" y="156" width="1" height="1" fill="#000"/>
<rect x="31" y="157" width="1" height="1" fill="#000"/>
<rect x="32" y="157" width="12" height="1" fill="url(#dy)"/>
<rect x="44" y="157" width="1" height="1" fill="#000"/>
<rect x="31" y="158" width="1" height="1" fill="#000"/>
<rect x="32" y="158" width="12" height="1" fill="url(#dy)"/>
<rect x="44" y="158" width="1" height="1" fill="#000"/>
<rect x="31" y="159" width="1" height="1" fill="#000"/>
<rect x="32" y="159" width="12" height="1" fill="url(#dy)"/>
<rect x="44" y="159" width="1" height="1" fill="#000"/>
<rect x="31" y="160" width="1" height="1" fill="#000"/>
<rect x="32" y="160" width="12" height="1" fill="url(#dy)"/>
<rect x="44" y="160" width="1" height="1" fill="#000"/>
<rect x="32" y="161" width="13" height="1" fill="#000"/>
<rect x="19" y="172" width="7" height="1" fill="#000"/>
<rect x="33" y="167" width="5" height="1" fill="#000"/>
<rect x="32" y="168" width="1" height="1" fill="#000"/>
<rect x="33" y="168" width="5" height="1" fill="url(#dy)"/>
<rect x="38" y="168" width="1" height="1" fill="#000"/>
<rect x="31" y="169" width="13" height="1" fill="#000"/>
<rect x="31" y="170" width="1" height="1" fill="#000"/>
<rect x="32" y="170" width="12" height="1" fill="url(#dy)"/>
<rect x="44" y="170" width="1" height="1" fill="#000"/>
<rect x="31" y="171" width="1" height="1" fill="#000"/>
<rect x="32" y="171" width="12" height="1" fill="url(#dy)"/>
<rect x="44" y="171" width="1" height="1" fill="#000"/>
<rect x="31" y="172" width="1" height="1" fill="#000"/>
<rect x="32" y="172" width="12" height="1" fill="url(#dy)"/>
<rect x="44" y="172" width="1" height="1" fill="#000"/>
<rect x="31" y="173" width="1" height="1" fill="#000"/>
<rect x="32" y="173" width="12" height="1" fill="url(#dy)"/>
<rect x="44" y="173" width="1" height="1" fill="#000"/>
<rect x="31" y="174" width="1" height="1" fill="#000"/>
<rect x="32" y="174" width="12" height="1" fill="url(#dy)"/>
<rect x="44" y="174" width="1" height="1" fill="#000"/>
<rect x="31" y="175" width="1" height="1" fill="#000"/>
<rect x="32" y="175" width="12" height="1" fill="url(#dy)"/>
<rect x="44" y="175" width="1" height="1" fill="#000"/>
<rect x="31" y="176" width="1" height="1" fill="#000"/>
<rect x="32" y="176" width="12" height="1" fill="url(#dy)"/>
<rect x="44" y="176" width="1" height="1" fill="#000"/>
<rect x="32" y="177" width="13" height="1" fill="#000"/>
<rect x="19" y="188" width="7" height="1" fill="#000"/>
<rect x="33" y="183" width="5" height="1" fill="#000"/>
<rect x="32" y="184" width="1" height="1" fill="#000"/>
<rect x="33" y="184" width="5" height="1" fill="url(#dy)"/>
<rect x="38" y="184" width="1" height="1" fill="#000"/>
<rect x="31" y="185" width="13" height="1" fill="#000"/>
<rect x="31" y="186" width="1" height="1" fill="#000"/>
<rect x="32" y="186" width="12" height="1" fill="url(#dy)"/>
<rect x="44" y="186" width="1" height="1" fill="#000"/>
<rect x="31" y="187" width="1" height="1" fill="#000"/>
<rect x="32" y="187" width="12" height="1" fill="url(#dy)"/>
<rect x="44" y="187" width="1" height="1" fill="#000"/>
<rect x="31" y="188" width="1" height="1" fill="#000"/>
<rect x="32" y="188" width="12" height="1" fill="url(#dy)"/>
<rect x="44" y="188" width="1" height="1" fill="#000"/>
<rect x="31" y="189" width="1" height="1" fill="#000"/>
<rect x="32" y="189" width="12" height="1" fill="url(#dy)"/>
<rect x="44" y="189" width="1" height="1" fill="#000"/>
<rect x="31" y="190" width="1" height="1" fill="#000"/>
<rect x="32" y="190" width="12" height="1" fill="url(#dy)"/>
<rect x="44" y="190" width="1" height="1" fill="#000"/>
<rect x="31" y="191" width="1" height="1" fill="#000"/>
<rect x="32" y="191" width="12" height="1" fill="url(#dy)"/>
<rect x="44" y="191" width="1" height="1" fill="#000"/>
<rect x="31" y="192" width="1" height="1" fill="#000"/>
<rect x="32" y="192" width="12" height="1" fill="url(#dy)"/>
<rect x="44" y="192" width="1" height="1" fill="#000"/>
<rect x="32" y="193" width="13" height="1" fill="#000"/>
<rect x="19" y="204" width="7" height="1" fill="#000"/>
<rect x="33" y="199" width="5" height="1" fill="#000"/>
<rect x="32" y="200" width="1" height="1" fill="#000"/>
<rect x="33" y="200" width="5" height="1" fill="url(#dy)"/>
<rect x="38" y="200" width="1" height="1" fill="#000"/>
<rect x="31" y="201" width="13" height="1" fill="#000"/>
<rect x="31" y="202" width="1" height="1" fill="#000"/>
<rect x="32" y="202" width="12" height="1" fill="url(#dy)"/>
<rect x="44" y="202" width="1" height="1" fill="#000"/>
<rect x="31" y="203" width="1" height="1" fill="#000"/>
<rect x="32" y="203" width="12" height="1" fill="url(#dy)"/>
<rect x="44" y="203" width="1" height="1" fill="#000"/>
<rect x="31" y="204" width="1" height="1" fill="#000"/>
<rect x="32" y="204" width="12" height="1" fill="url(#dy)"/>
<rect x="44" y="204" width="1" height="1" fill="#000"/>
<rect x="31" y="205" width="1" height="1" fill="#000"/>
<rect x="32" y="205" width="12" height="1" fill="url(#dy)"/>
<rect x="44" y="205" width="1" height="1" fill="#000"/>
<rect x="31" y="206" width="1" height="1" fill="#000"/>
<rect x="32" y="206" width="12" height="1" fill="url(#dy)"/>
<rect x="44" y="206" width="1" height="1" fill="#000"/>
<rect x="31" y="207" width="1" height="1" fill="#000"/>
<rect x="32" y="207" width="12" height="1" fill="url(#dy)"/>
<rect x="44" y="207" width="1" height="1" fill="#000"/>
<rect x="31" y="208" width="1" height="1" fill="#000"/>
<rect x="32" y="208" width="12" height="1" fill="url(#dy)"/>
<rect x="44" y="208" width="1" height="1" fill="#000"/>
<rect x="32" y="209" width="13" height="1" fill="#000"/>
<rect x="19" y="220" width="7" height="1" fill="#000"/>
<rect x="33" y="215" width="5" height="1" fill="#000"/>
<rect x="32" y="216" width="1" height="1" fill="#000"/>
<rect x="33" y="216" width="5" height="1" fill="url(#dy)"/>
<rect x="38" y="216" width="1" height="1" fill="#000"/>
<rect x="31" y="217" width="13" height="1" fill="#000"/>
<rect x="31" y="218" width="1" height="1" fill="#000"/>
<rect x="32" y="218" width="12" height="1" fill="url(#dy)"/>
<rect x="44" y="218" width="1" height="1" fill="#000"/>
<rect x="31" y="219" width="1" height="1" fill="#000"/>
<rect x="32" y="219" width="12" height="1" fill="url(#dy)"/>
<rect x="44" y="219" width="1" height="1" fill="#000"/>
<rect x="31" y="220" width="1" height="1" fill="#000"/>
<rect x="32" y="220" width="12" height="1" fill="url(#dy)"/>
<rect x="44" y="220" width="1" height="1" fill="#000"/>
<rect x="31" y="221" width="1" height="1" fill="#000"/>
<rect x="32" y="221" width="12" height="1" fill="url(#dy)"/>
<rect x="44" y="221" width="1" height="1" fill="#000"/>
<rect x="31" y="222" width="1" height="1" fill="#000"/>
<rect x="32" y="222" width="12" height="1" fill="url(#dy)"/>
<rect x="44" y="222" width="1" height="1" fill="#000"/>
<rect x="31" y="223" width="1" height="1" fill="#000"/>
<rect x="32" y="223" width="12" height="1" fill="url(#dy)"/>
<rect x="44" y="223" width="1" height="1" fill="#000"/>
<rect x="31" y="224" width="1" height="1" fill="#000"/>
<rect x="32" y="224" width="12" height="1" fill="url(#dy)"/>
<rect x="44" y="224" width="1" height="1" fill="#000"/>
<rect x="32" y="225" width="13" height="1" fill="#000"/>
<rect x="19" y="236" width="7" height="1" fill="#000"/>
<rect x="33" y="231" width="5" height="1" fill="#000"/>
<rect x="32" y="232" width="1" height="1" fill="#000"/>
<rect x="33" y="232" width="5" height="1" fill="url(#dy)"/>
<rect x="38" y="232" width="1" height="1" fill="#000"/>
<rect x="31" y="233" width="13" height="1" fill="#000"/>
<rect x="31" y="234" width="1" height="1" fill="#000"/>
<rect x="32" y="234" width="12" height="1" fill="url(#dy)"/>
<rect x="44" y="234" width="1" height="1" fill="#000"/>
<rect x="31" y="235" width="1" height="1" fill="#000"/>
<rect x="32" y="235" width="12" height="1" fill="url(#dy)"/>
<rect x="44" y="235" width="1" height="1" fill="#000"/>
<rect x="31" y="236" width="1" height="1" fill="#000"/>
<rect x="32" y="236" width="12" height="1" fill="url(#dy)"/>
<rect x="44" y="236" width="1" height="1" fill="#000"/>
<rect x="31" y="237" width="1" height="1" fill="#000"/>
<rect x="32" y="237" width="12" height="1" fill="url(#dy)"/>
<rect x="44" y="237" width="1" height="1" fill="#000"/>
<rect x="31" y="238" width="1" height="1" fill="#000"/>
<rect x="32" y="238" width="12" height="1" fill="url(#dy)"/>
<rect x="44" y="238" width="1" height="1" fill="#000"/>
<rect x="31" y="239" width="1" height="1" fill="#000"/>
<rect x="32" y="239" width="12" height="1" fill="url(#dy)"/>
<rect x="44" y="239" width="1" height="1" fill="#000"/>
<rect x="31" y="240" width="1" height="1" fill="#000"/>
<rect x="32" y="240" width="12" height="1" fill="url(#dy)"/>
<rect x="44" y="240" width="1" height="1" fill="#000"/>
<rect x="32" y="241" width="13" height="1" fill="#000"/>
<clipPath id="fl"><rect x="186" y="116" width="320" height="206"/></clipPath><g clip-path="url(#fl)">
<rect x="192" y="119" width="5" height="1" fill="#000"/>
<rect x="191" y="120" width="1" height="1" fill="#000"/>
<rect x="192" y="120" width="5" height="1" fill="url(#dy)"/>
<rect x="197" y="120" width="1" height="1" fill="#000"/>
<rect x="190" y="121" width="13" height="1" fill="#000"/>
<rect x="190" y="122" width="1" height="1" fill="#000"/>
<rect x="191" y="122" width="12" height="1" fill="url(#dy)"/>
<rect x="203" y="122" width="1" height="1" fill="#000"/>
<rect x="190" y="123" width="1" height="1" fill="#000"/>
<rect x="191" y="123" width="12" height="1" fill="url(#dy)"/>
<rect x="203" y="123" width="1" height="1" fill="#000"/>
<rect x="190" y="124" width="1" height="1" fill="#000"/>
<rect x="191" y="124" width="12" height="1" fill="url(#dy)"/>
<rect x="203" y="124" width="1" height="1" fill="#000"/>
<rect x="190" y="125" width="1" height="1" fill="#000"/>
<rect x="191" y="125" width="12" height="1" fill="url(#dy)"/>
<rect x="203" y="125" width="1" height="1" fill="#000"/>
<rect x="190" y="126" width="1" height="1" fill="#000"/>
<rect x="191" y="126" width="12" height="1" fill="url(#dy)"/>
<rect x="203" y="126" width="1" height="1" fill="#000"/>
<rect x="190" y="127" width="1" height="1" fill="#000"/>
<rect x="191" y="127" width="12" height="1" fill="url(#dy)"/>
<rect x="203" y="127" width="1" height="1" fill="#000"/>
<rect x="190" y="128" width="1" height="1" fill="#000"/>
<rect x="191" y="128" width="12" height="1" fill="url(#dy)"/>
<rect x="203" y="128" width="1" height="1" fill="#000"/>
<rect x="191" y="129" width="13" height="1" fill="#000"/>
<rect x="192" y="135" width="5" height="1" fill="#000"/>
<rect x="191" y="136" width="1" height="1" fill="#000"/>
<rect x="192" y="136" width="5" height="1" fill="url(#dy)"/>
<rect x="197" y="136" width="1" height="1" fill="#000"/>
<rect x="190" y="137" width="13" height="1" fill="#000"/>
<rect x="190" y="138" width="1" height="1" fill="#000"/>
<rect x="191" y="138" width="12" height="1" fill="url(#dy)"/>
<rect x="203" y="138" width="1" height="1" fill="#000"/>
<rect x="190" y="139" width="1" height="1" fill="#000"/>
<rect x="191" y="139" width="12" height="1" fill="url(#dy)"/>
<rect x="203" y="139" width="1" height="1" fill="#000"/>
<rect x="190" y="140" width="1" height="1" fill="#000"/>
<rect x="191" y="140" width="12" height="1" fill="url(#dy)"/>
<rect x="203" y="140" width="1" height="1" fill="#000"/>
<rect x="190" y="141" width="1" height="1" fill="#000"/>
<rect x="191" y="141" width="12" height="1" fill="url(#dy)"/>
<rect x="203" y="141" width="1" height="1" fill="#000"/>
<rect x="190" y="142" width="1" height="1" fill="#000"/>
<rect x="191" y="142" width="12" height="1" fill="url(#dy)"/>
<rect x="203" y="142" width="1" height="1" fill="#000"/>
<rect x="190" y="143" width="1" height="1" fill="#000"/>
<rect x="191" y="143" width="12" height="1" fill="url(#dy)"/>
<rect x="203" y="143" width="1" height="1" fill="#000"/>
<rect x="190" y="144" width="1" height="1" fill="#000"/>
<rect x="191" y="144" width="12" height="1" fill="url(#dy)"/>
<rect x="203" y="144" width="1" height="1" fill="#000"/>
<rect x="191" y="145" width="13" height="1" fill="#000"/>
<rect x="192" y="151" width="5" height="1" fill="#000"/>
<rect x="191" y="152" width="1" height="1" fill="#000"/>
<rect x="192" y="152" width="5" height="1" fill="url(#dy)"/>
<rect x="197" y="152" width="1" height="1" fill="#000"/>
<rect x="190" y="153" width="13" height="1" fill="#000"/>
<rect x="190" y="154" width="1" height="1" fill="#000"/>
<rect x="191" y="154" width="12" height="1" fill="url(#dy)"/>
<rect x="203" y="154" width="1" height="1" fill="#000"/>
<rect x="190" y="155" width="1" height="1" fill="#000"/>
<rect x="191" y="155" width="12" height="1" fill="url(#dy)"/>
<rect x="203" y="155" width="1" height="1" fill="#000"/>
<rect x="190" y="156" width="1" height="1" fill="#000"/>
<rect x="191" y="156" width="12" height="1" fill="url(#dy)"/>
<rect x="203" y="156" width="1" height="1" fill="#000"/>
<rect x="190" y="157" width="1" height="1" fill="#000"/>
<rect x="191" y="157" width="12" height="1" fill="url(#dy)"/>
<rect x="203" y="157" width="1" height="1" fill="#000"/>
<rect x="190" y="158" width="1" height="1" fill="#000"/>
<rect x="191" y="158" width="12" height="1" fill="url(#dy)"/>
<rect x="203" y="158" width="1" height="1" fill="#000"/>
<rect x="190" y="159" width="1" height="1" fill="#000"/>
<rect x="191" y="159" width="12" height="1" fill="url(#dy)"/>
<rect x="203" y="159" width="1" height="1" fill="#000"/>
<rect x="190" y="160" width="1" height="1" fill="#000"/>
<rect x="191" y="160" width="12" height="1" fill="url(#dy)"/>
<rect x="203" y="160" width="1" height="1" fill="#000"/>
<rect x="191" y="161" width="13" height="1" fill="#000"/>
<rect x="192" y="167" width="5" height="1" fill="#000"/>
<rect x="191" y="168" width="1" height="1" fill="#000"/>
<rect x="192" y="168" width="5" height="1" fill="url(#dy)"/>
<rect x="197" y="168" width="1" height="1" fill="#000"/>
<rect x="190" y="169" width="13" height="1" fill="#000"/>
<rect x="190" y="170" width="1" height="1" fill="#000"/>
<rect x="191" y="170" width="12" height="1" fill="url(#dy)"/>
<rect x="203" y="170" width="1" height="1" fill="#000"/>
<rect x="190" y="171" width="1" height="1" fill="#000"/>
<rect x="191" y="171" width="12" height="1" fill="url(#dy)"/>
<rect x="203" y="171" width="1" height="1" fill="#000"/>
<rect x="190" y="172" width="1" height="1" fill="#000"/>
<rect x="191" y="172" width="12" height="1" fill="url(#dy)"/>
<rect x="203" y="172" width="1" height="1" fill="#000"/>
<rect x="190" y="173" width="1" height="1" fill="#000"/>
<rect x="191" y="173" width="12" height="1" fill="url(#dy)"/>
<rect x="203" y="173" width="1" height="1" fill="#000"/>
<rect x="190" y="174" width="1" height="1" fill="#000"/>
<rect x="191" y="174" width="12" height="1" fill="url(#dy)"/>
<rect x="203" y="174" width="1" height="1" fill="#000"/>
<rect x="190" y="175" width="1" height="1" fill="#000"/>
<rect x="191" y="175" width="12" height="1" fill="url(#dy)"/>
<rect x="203" y="175" width="1" height="1" fill="#000"/>
<rect x="190" y="176" width="1" height="1" fill="#000"/>
<rect x="191" y="176" width="12" height="1" fill="url(#dy)"/>
<rect x="203" y="176" width="1" height="1" fill="#000"/>
<rect x="191" y="177" width="13" height="1" fill="#000"/>
<rect x="192" y="183" width="5" height="1" fill="#000"/>
<rect x="191" y="184" width="1" height="1" fill="#000"/>
<rect x="192" y="184" width="5" height="1" fill="url(#dy)"/>
<rect x="197" y="184" width="1" height="1" fill="#000"/>
<rect x="190" y="185" width="13" height="1" fill="#000"/>
<rect x="190" y="186" width="1" height="1" fill="#000"/>
<rect x="191" y="186" width="12" height="1" fill="url(#dy)"/>
<rect x="203" y="186" width="1" height="1" fill="#000"/>
<rect x="190" y="187" width="1" height="1" fill="#000"/>
<rect x="191" y="187" width="12" height="1" fill="url(#dy)"/>
<rect x="203" y="187" width="1" height="1" fill="#000"/>
<rect x="190" y="188" width="1" height="1" fill="#000"/>
<rect x="191" y="188" width="12" height="1" fill="url(#dy)"/>
<rect x="203" y="188" width="1" height="1" fill="#000"/>
<rect x="190" y="189" width="1" height="1" fill="#000"/>
<rect x="191" y="189" width="12" height="1" fill="url(#dy)"/>
<rect x="203" y="189" width="1" height="1" fill="#000"/>
<rect x="190" y="190" width="1" height="1" fill="#000"/>
<rect x="191" y="190" width="12" height="1" fill="url(#dy)"/>
<rect x="203" y="190" width="1" height="1" fill="#000"/>
<rect x="190" y="191" width="1" height="1" fill="#000"/>
<rect x="191" y="191" width="12" height="1" fill="url(#dy)"/>
<rect x="203" y="191" width="1" height="1" fill="#000"/>
<rect x="190" y="192" width="1" height="1" fill="#000"/>
<rect x="191" y="192" width="12" height="1" fill="url(#dy)"/>
<rect x="203" y="192" width="1" height="1" fill="#000"/>
<rect x="191" y="193" width="13" height="1" fill="#000"/>
<rect x="192" y="199" width="5" height="1" fill="#000"/>
<rect x="191" y="200" width="1" height="1" fill="#000"/>
<rect x="192" y="200" width="5" height="1" fill="url(#dy)"/>
<rect x="197" y="200" width="1" height="1" fill="#000"/>
<rect x="190" y="201" width="13" height="1" fill="#000"/>
<rect x="190" y="202" width="1" height="1" fill="#000"/>
<rect x="191" y="202" width="12" height="1" fill="url(#dy)"/>
<rect x="203" y="202" width="1" height="1" fill="#000"/>
<rect x="190" y="203" width="1" height="1" fill="#000"/>
<rect x="191" y="203" width="12" height="1" fill="url(#dy)"/>
<rect x="203" y="203" width="1" height="1" fill="#000"/>
<rect x="190" y="204" width="1" height="1" fill="#000"/>
<rect x="191" y="204" width="12" height="1" fill="url(#dy)"/>
<rect x="203" y="204" width="1" height="1" fill="#000"/>
<rect x="190" y="205" width="1" height="1" fill="#000"/>
<rect x="191" y="205" width="12" height="1" fill="url(#dy)"/>
<rect x="203" y="205" width="1" height="1" fill="#000"/>
<rect x="190" y="206" width="1" height="1" fill="#000"/>
<rect x="191" y="206" width="12" height="1" fill="url(#dy)"/>
<rect x="203" y="206" width="1" height="1" fill="#000"/>
<rect x="190" y="207" width="1" height="1" fill="#000"/>
<rect x="191" y="207" width="12" height="1" fill="url(#dy)"/>
<rect x="203" y="207" width="1" height="1" fill="#000"/>
<rect x="190" y="208" width="1" height="1" fill="#000"/>
<rect x="191" y="208" width="12" height="1" fill="url(#dy)"/>
<rect x="203" y="208" width="1" height="1" fill="#000"/>
<rect x="191" y="209" width="13" height="1" fill="#000"/>
<rect x="192" y="215" width="5" height="1" fill="#000"/>
<rect x="191" y="216" width="1" height="1" fill="#000"/>
<rect x="192" y="216" width="5" height="1" fill="url(#dy)"/>
<rect x="197" y="216" width="1" height="1" fill="#000"/>
<rect x="190" y="217" width="13" height="1" fill="#000"/>
<rect x="190" y="218" width="1" height="1" fill="#000"/>
<rect x="191" y="218" width="12" height="1" fill="url(#dy)"/>
<rect x="203" y="218" width="1" height="1" fill="#000"/>
<rect x="190" y="219" width="1" height="1" fill="#000"/>
<rect x="191" y="219" width="12" height="1" fill="url(#dy)"/>
<rect x="203" y="219" width="1" height="1" fill="#000"/>
<rect x="190" y="220" width="1" height="1" fill="#000"/>
<rect x="191" y="220" width="12" height="1" fill="url(#dy)"/>
<rect x="203" y="220" width="1" height="1" fill="#000"/>
<rect x="190" y="221" width="1" height="1" fill="#000"/>
<rect x="191" y="221" width="12" height="1" fill="url(#dy)"/>
<rect x="203" y="221" width="1" height="1" fill="#000"/>
<rect x="190" y="222" width="1" height="1" fill="#000"/>
<rect x="191" y="222" width="12" height="1" fill="url(#dy)"/>
<rect x="203" y="222" width="1" height="1" fill="#000"/>
<rect x="190" y="223" width="1" height="1" fill="#000"/>
<rect x="191" y="223" width="12" height="1" fill="url(#dy)"/>
<rect x="203" y="223" width="1" height="1" fill="#000"/>
<rect x="190" y="224" width="1" height="1" fill="#000"/>
<rect x="191" y="224" width="12" height="1" fill="url(#dy)"/>
<rect x="203" y="224" width="1" height="1" fill="#000"/>
<rect x="191" y="225" width="13" height="1" fill="#000"/>
<rect x="190" y="229" width="9" height="1" fill="#000"/>
<rect x="190" y="230" width="1" height="1" fill="#000"/>
<rect x="191" y="230" width="7" height="1" fill="#FFF"/>
<rect x="198" y="230" width="2" height="1" fill="#000"/>
<rect x="190" y="231" width="1" height="1" fill="#000"/>
<rect x="191" y="231" width="7" height="1" fill="#FFF"/>
<rect x="198" y="231" width="1" height="1" fill="#000"/>
<rect x="199" y="231" width="1" height="1" fill="#FFF"/>
<rect x="200" y="231" width="1" height="1" fill="#000"/>
<rect x="190" y="232" width="1" height="1" fill="#000"/>
<rect x="191" y="232" width="7" height="1" fill="#FFF"/>
<rect x="198" y="232" width="4" height="1" fill="#000"/>
<rect x="190" y="233" width="1" height="1" fill="#000"/>
<rect x="191" y="233" width="10" height="1" fill="#FFF"/>
<rect x="201" y="233" width="1" height="1" fill="#000"/>
<rect x="190" y="234" width="1" height="1" fill="#000"/>
<rect x="191" y="234" width="10" height="1" fill="#FFF"/>
<rect x="201" y="234" width="1" height="1" fill="#000"/>
<rect x="190" y="235" width="1" height="1" fill="#000"/>
<rect x="191" y="235" width="10" height="1" fill="#FFF"/>
<rect x="201" y="235" width="1" height="1" fill="#000"/>
<rect x="190" y="236" width="1" height="1" fill="#000"/>
<rect x="191" y="236" width="10" height="1" fill="#FFF"/>
<rect x="201" y="236" width="1" height="1" fill="#000"/>
<rect x="190" y="237" width="1" height="1" fill="#000"/>
<rect x="191" y="237" width="10" height="1" fill="#FFF"/>
<rect x="201" y="237" width="1" height="1" fill="#000"/>
<rect x="190" y="238" width="1" height="1" fill="#000"/>
<rect x="191" y="238" width="10" height="1" fill="#FFF"/>
<rect x="201" y="238" width="1" height="1" fill="#000"/>
<rect x="190" y="239" width="1" height="1" fill="#000"/>
<rect x="191" y="239" width="10" height="1" fill="#FFF"/>
<rect x="201" y="239" width="1" height="1" fill="#000"/>
<rect x="190" y="240" width="1" height="1" fill="#000"/>
<rect x="191" y="240" width="10" height="1" fill="#FFF"/>
<rect x="201" y="240" width="1" height="1" fill="#000"/>
<rect x="190" y="241" width="1" height="1" fill="#000"/>
<rect x="191" y="241" width="10" height="1" fill="#FFF"/>
<rect x="201" y="241" width="1" height="1" fill="#000"/>
<rect x="190" y="242" width="12" height="1" fill="#000"/>
<rect x="190" y="245" width="9" height="1" fill="#000"/>
<rect x="190" y="246" width="1" height="1" fill="#000"/>
<rect x="191" y="246" width="7" height="1" fill="#FFF"/>
<rect x="198" y="246" width="2" height="1" fill="#000"/>
<rect x="190" y="247" width="1" height="1" fill="#000"/>
<rect x="191" y="247" width="7" height="1" fill="#FFF"/>
<rect x="198" y="247" width="1" height="1" fill="#000"/>
<rect x="199" y="247" width="1" height="1" fill="#FFF"/>
<rect x="200" y="247" width="1" height="1" fill="#000"/>
<rect x="190" y="248" width="1" height="1" fill="#000"/>
<rect x="191" y="248" width="7" height="1" fill="#FFF"/>
<rect x="198" y="248" width="4" height="1" fill="#000"/>
<rect x="190" y="249" width="1" height="1" fill="#000"/>
<rect x="191" y="249" width="10" height="1" fill="#FFF"/>
<rect x="201" y="249" width="1" height="1" fill="#000"/>
<rect x="190" y="250" width="1" height="1" fill="#000"/>
<rect x="191" y="250" width="10" height="1" fill="#FFF"/>
<rect x="201" y="250" width="1" height="1" fill="#000"/>
<rect x="190" y="251" width="1" height="1" fill="#000"/>
<rect x="191" y="251" width="10" height="1" fill="#FFF"/>
<rect x="201" y="251" width="1" height="1" fill="#000"/>
<rect x="190" y="252" width="1" height="1" fill="#000"/>
<rect x="191" y="252" width="10" height="1" fill="#FFF"/>
<rect x="201" y="252" width="1" height="1" fill="#000"/>
<rect x="190" y="253" width="1" height="1" fill="#000"/>
<rect x="191" y="253" width="10" height="1" fill="#FFF"/>
<rect x="201" y="253" width="1" height="1" fill="#000"/>
<rect x="190" y="254" width="1" height="1" fill="#000"/>
<rect x="191" y="254" width="10" height="1" fill="#FFF"/>
<rect x="201" y="254" width="1" height="1" fill="#000"/>
<rect x="190" y="255" width="1" height="1" fill="#000"/>
<rect x="191" y="255" width="10" height="1" fill="#FFF"/>
<rect x="201" y="255" width="1" height="1" fill="#000"/>
<rect x="190" y="256" width="1" height="1" fill="#000"/>
<rect x="191" y="256" width="10" height="1" fill="#FFF"/>
<rect x="201" y="256" width="1" height="1" fill="#000"/>
<rect x="190" y="257" width="1" height="1" fill="#000"/>
<rect x="191" y="257" width="10" height="1" fill="#FFF"/>
<rect x="201" y="257" width="1" height="1" fill="#000"/>
<rect x="190" y="258" width="12" height="1" fill="#000"/>
<rect x="190" y="261" width="9" height="1" fill="#000"/>
<rect x="190" y="262" width="1" height="1" fill="#000"/>
<rect x="191" y="262" width="7" height="1" fill="#FFF"/>
<rect x="198" y="262" width="2" height="1" fill="#000"/>
<rect x="190" y="263" width="1" height="1" fill="#000"/>
<rect x="191" y="263" width="7" height="1" fill="#FFF"/>
<rect x="198" y="263" width="1" height="1" fill="#000"/>
<rect x="199" y="263" width="1" height="1" fill="#FFF"/>
<rect x="200" y="263" width="1" height="1" fill="#000"/>
<rect x="190" y="264" width="1" height="1" fill="#000"/>
<rect x="191" y="264" width="7" height="1" fill="#FFF"/>
<rect x="198" y="264" width="4" height="1" fill="#000"/>
<rect x="190" y="265" width="1" height="1" fill="#000"/>
<rect x="191" y="265" width="10" height="1" fill="#FFF"/>
<rect x="201" y="265" width="1" height="1" fill="#000"/>
<rect x="190" y="266" width="1" height="1" fill="#000"/>
<rect x="191" y="266" width="10" height="1" fill="#FFF"/>
<rect x="201" y="266" width="1" height="1" fill="#000"/>
<rect x="190" y="267" width="1" height="1" fill="#000"/>
<rect x="191" y="267" width="10" height="1" fill="#FFF"/>
<rect x="201" y="267" width="1" height="1" fill="#000"/>
<rect x="190" y="268" width="1" height="1" fill="#000"/>
<rect x="191" y="268" width="10" height="1" fill="#FFF"/>
<rect x="201" y="268" width="1" height="1" fill="#000"/>
<rect x="190" y="269" width="1" height="1" fill="#000"/>
<rect x="191" y="269" width="10" height="1" fill="#FFF"/>
<rect x="201" y="269" width="1" height="1" fill="#000"/>
<rect x="190" y="270" width="1" height="1" fill="#000"/>
<rect x="191" y="270" width="10" height="1" fill="#FFF"/>
<rect x="201" y="270" width="1" height="1" fill="#000"/>
<rect x="190" y="271" width="1" height="1" fill="#000"/>
<rect x="191" y="271" width="10" height="1" fill="#FFF"/>
<rect x="201" y="271" width="1" height="1" fill="#000"/>
<rect x="190" y="272" width="1" height="1" fill="#000"/>
<rect x="191" y="272" width="10" height="1" fill="#FFF"/>
<rect x="201" y="272" width="1" height="1" fill="#000"/>
<rect x="190" y="273" width="1" height="1" fill="#000"/>
<rect x="191" y="273" width="10" height="1" fill="#FFF"/>
<rect x="201" y="273" width="1" height="1" fill="#000"/>
<rect x="190" y="274" width="12" height="1" fill="#000"/>
<rect x="190" y="277" width="9" height="1" fill="#000"/>
<rect x="190" y="278" width="1" height="1" fill="#000"/>
<rect x="191" y="278" width="7" height="1" fill="#FFF"/>
<rect x="198" y="278" width="2" height="1" fill="#000"/>
<rect x="190" y="279" width="1" height="1" fill="#000"/>
<rect x="191" y="279" width="7" height="1" fill="#FFF"/>
<rect x="198" y="279" width="1" height="1" fill="#000"/>
<rect x="199" y="279" width="1" height="1" fill="#FFF"/>
<rect x="200" y="279" width="1" height="1" fill="#000"/>
<rect x="190" y="280" width="1" height="1" fill="#000"/>
<rect x="191" y="280" width="7" height="1" fill="#FFF"/>
<rect x="198" y="280" width="4" height="1" fill="#000"/>
<rect x="190" y="281" width="1" height="1" fill="#000"/>
<rect x="191" y="281" width="10" height="1" fill="#FFF"/>
<rect x="201" y="281" width="1" height="1" fill="#000"/>
<rect x="190" y="282" width="1" height="1" fill="#000"/>
<rect x="191" y="282" width="10" height="1" fill="#FFF"/>
<rect x="201" y="282" width="1" height="1" fill="#000"/>
<rect x="190" y="283" width="1" height="1" fill="#000"/>
<rect x="191" y="283" width="10" height="1" fill="#FFF"/>
<rect x="201" y="283" width="1" height="1" fill="#000"/>
<rect x="190" y="284" width="1" height="1" fill="#000"/>
<rect x="191" y="284" width="10" height="1" fill="#FFF"/>
<rect x="201" y="284" width="1" height="1" fill="#000"/>
<rect x="190" y="285" width="1" height="1" fill="#000"/>
<rect x="191" y="285" width="10" height="1" fill="#FFF"/>
<rect x="201" y="285" width="1" height="1" fill="#000"/>
<rect x="190" y="286" width="1" height="1" fill="#000"/>
<rect x="191" y="286" width="10" height="1" fill="#FFF"/>
<rect x="201" y="286" width="1" height="1" fill="#000"/>
<rect x="190" y="287" width="1" height="1" fill="#000"/>
<rect x="191" y="287" width="10" height="1" fill="#FFF"/>
<rect x="201" y="287" width="1" height="1" fill="#000"/>
<rect x="190" y="288" width="1" height="1" fill="#000"/>
<rect x="191" y="288" width="10" height="1" fill="#FFF"/>
<rect x="201" y="288" width="1" height="1" fill="#000"/>
<rect x="190" y="289" width="1" height="1" fill="#000"/>
<rect x="191" y="289" width="10" height="1" fill="#FFF"/>
<rect x="201" y="289" width="1" height="1" fill="#000"/>
<rect x="190" y="290" width="12" height="1" fill="#000"/>
<rect x="188" y="294" width="16" height="1" fill="#000"/>
<rect x="188" y="295" width="1" height="1" fill="#000"/>
<rect x="189" y="295" width="14" height="1" fill="#00FFFF"/>
<rect x="203" y="295" width="1" height="1" fill="#000"/>
<rect x="188" y="296" width="16" height="1" fill="#000"/>
<rect x="188" y="297" width="1" height="1" fill="#000"/>
<rect x="189" y="297" width="14" height="1" fill="url(#dg)"/>
<rect x="203" y="297" width="1" height="1" fill="#000"/>
<rect x="188" y="298" width="1" height="1" fill="#000"/>
<rect x="189" y="298" width="14" height="1" fill="url(#dg)"/>
<rect x="203" y="298" width="1" height="1" fill="#000"/>
<rect x="188" y="299" width="1" height="1" fill="#000"/>
<rect x="189" y="299" width="14" height="1" fill="url(#dg)"/>
<rect x="203" y="299" width="1" height="1" fill="#000"/>
<rect x="188" y="300" width="1" height="1" fill="#000"/>
<rect x="189" y="300" width="14" height="1" fill="url(#dg)"/>
<rect x="203" y="300" width="1" height="1" fill="#000"/>
<rect x="188" y="301" width="1" height="1" fill="#000"/>
<rect x="189" y="301" width="14" height="1" fill="url(#dg)"/>
<rect x="203" y="301" width="1" height="1" fill="#000"/>
<rect x="188" y="302" width="1" height="1" fill="#000"/>
<rect x="189" y="302" width="14" height="1" fill="url(#dg)"/>
<rect x="203" y="302" width="1" height="1" fill="#000"/>
<rect x="188" y="303" width="1" height="1" fill="#000"/>
<rect x="189" y="303" width="14" height="1" fill="url(#dg)"/>
<rect x="203" y="303" width="1" height="1" fill="#000"/>
<rect x="188" y="304" width="1" height="1" fill="#000"/>
<rect x="189" y="304" width="14" height="1" fill="url(#dg)"/>
<rect x="203" y="304" width="1" height="1" fill="#000"/>
<rect x="188" y="305" width="16" height="1" fill="#000"/>
<rect x="190" y="309" width="9" height="1" fill="#000"/>
<rect x="190" y="310" width="1" height="1" fill="#000"/>
<rect x="191" y="310" width="7" height="1" fill="#FFF"/>
<rect x="198" y="310" width="2" height="1" fill="#000"/>
<rect x="190" y="311" width="1" height="1" fill="#000"/>
<rect x="191" y="311" width="7" height="1" fill="#FFF"/>
<rect x="198" y="311" width="1" height="1" fill="#000"/>
<rect x="199" y="311" width="1" height="1" fill="#FFF"/>
<rect x="200" y="311" width="1" height="1" fill="#000"/>
<rect x="190" y="312" width="1" height="1" fill="#000"/>
<rect x="191" y="312" width="7" height="1" fill="#FFF"/>
<rect x="198" y="312" width="4" height="1" fill="#000"/>
<rect x="190" y="313" width="1" height="1" fill="#000"/>
<rect x="191" y="313" width="10" height="1" fill="#FFF"/>
<rect x="201" y="313" width="1" height="1" fill="#000"/>
<rect x="190" y="314" width="1" height="1" fill="#000"/>
<rect x="191" y="314" width="10" height="1" fill="#FFF"/>
<rect x="201" y="314" width="1" height="1" fill="#000"/>
<rect x="190" y="315" width="1" height="1" fill="#000"/>
<rect x="191" y="315" width="10" height="1" fill="#FFF"/>
<rect x="201" y="315" width="1" height="1" fill="#000"/>
<rect x="190" y="316" width="1" height="1" fill="#000"/>
<rect x="191" y="316" width="10" height="1" fill="#FFF"/>
<rect x="201" y="316" width="1" height="1" fill="#000"/>
<rect x="190" y="317" width="1" height="1" fill="#000"/>
<rect x="191" y="317" width="10" height="1" fill="#FFF"/>
<rect x="201" y="317" width="1" height="1" fill="#000"/>
<rect x="190" y="318" width="1" height="1" fill="#000"/>
<rect x="191" y="318" width="10" height="1" fill="#FFF"/>
<rect x="201" y="318" width="1" height="1" fill="#000"/>
<rect x="190" y="319" width="1" height="1" fill="#000"/>
<rect x="191" y="319" width="10" height="1" fill="#FFF"/>
<rect x="201" y="319" width="1" height="1" fill="#000"/>
<rect x="190" y="320" width="1" height="1" fill="#000"/>
<rect x="191" y="320" width="10" height="1" fill="#FFF"/>
<rect x="201" y="320" width="1" height="1" fill="#000"/>
<rect x="190" y="321" width="1" height="1" fill="#000"/>
<rect x="191" y="321" width="10" height="1" fill="#FFF"/>
<rect x="201" y="321" width="1" height="1" fill="#000"/>
<rect x="190" y="322" width="12" height="1" fill="#000"/>
</g>
<rect x="12" y="455" width="207" height="1" fill="#808080"/>
<rect x="12" y="455" width="1" height="18" fill="#808080"/>
<rect x="12" y="473" width="208" height="1" fill="#FFF"/>
<rect x="219" y="455" width="1" height="19" fill="#FFF"/>
<rect x="228" y="455" width="159" height="1" fill="#808080"/>
<rect x="228" y="455" width="1" height="18" fill="#808080"/>
<rect x="228" y="473" width="160" height="1" fill="#FFF"/>
<rect x="387" y="455" width="1" height="19" fill="#FFF"/>
<rect x="111" y="127" width="2" height="1" fill="#000"/>
<rect x="111" y="128" width="1" height="1" fill="#000"/>
<rect x="112" y="128" width="1" height="1" fill="#FFF"/>
<rect x="113" y="128" width="1" height="1" fill="#000"/>
<rect x="111" y="129" width="1" height="1" fill="#000"/>
<rect x="112" y="129" width="2" height="1" fill="#FFF"/>
<rect x="114" y="129" width="1" height="1" fill="#000"/>
<rect x="111" y="130" width="1" height="1" fill="#000"/>
<rect x="112" y="130" width="3" height="1" fill="#FFF"/>
<rect x="115" y="130" width="1" height="1" fill="#000"/>
<rect x="111" y="131" width="1" height="1" fill="#000"/>
<rect x="112" y="131" width="4" height="1" fill="#FFF"/>
<rect x="116" y="131" width="1" height="1" fill="#000"/>
<rect x="111" y="132" width="1" height="1" fill="#000"/>
<rect x="112" y="132" width="5" height="1" fill="#FFF"/>
<rect x="117" y="132" width="1" height="1" fill="#000"/>
<rect x="111" y="133" width="1" height="1" fill="#000"/>
<rect x="112" y="133" width="6" height="1" fill="#FFF"/>
<rect x="118" y="133" width="1" height="1" fill="#000"/>
<rect x="111" y="134" width="1" height="1" fill="#000"/>
<rect x="112" y="134" width="7" height="1" fill="#FFF"/>
<rect x="119" y="134" width="1" height="1" fill="#000"/>
<rect x="111" y="135" width="1" height="1" fill="#000"/>
<rect x="112" y="135" width="8" height="1" fill="#FFF"/>
<rect x="120" y="135" width="1" height="1" fill="#000"/>
<rect x="111" y="136" width="1" height="1" fill="#000"/>
<rect x="112" y="136" width="9" height="1" fill="#FFF"/>
<rect x="121" y="136" width="1" height="1" fill="#000"/>
<rect x="111" y="137" width="1" height="1" fill="#000"/>
<rect x="112" y="137" width="6" height="1" fill="#FFF"/>
<rect x="118" y="137" width="5" height="1" fill="#000"/>
<rect x="111" y="138" width="1" height="1" fill="#000"/>
<rect x="112" y="138" width="3" height="1" fill="#FFF"/>
<rect x="115" y="138" width="1" height="1" fill="#000"/>
<rect x="116" y="138" width="2" height="1" fill="#FFF"/>
<rect x="118" y="138" width="1" height="1" fill="#000"/>
<rect x="111" y="139" width="1" height="1" fill="#000"/>
<rect x="112" y="139" width="2" height="1" fill="#FFF"/>
<rect x="114" y="139" width="2" height="1" fill="#000"/>
<rect x="116" y="139" width="2" height="1" fill="#FFF"/>
<rect x="118" y="139" width="1" height="1" fill="#000"/>
<rect x="111" y="140" width="1" height="1" fill="#000"/>
<rect x="112" y="140" width="1" height="1" fill="#FFF"/>
<rect x="113" y="140" width="1" height="1" fill="#000"/>
<rect x="116" y="140" width="1" height="1" fill="#000"/>
<rect x="117" y="140" width="2" height="1" fill="#FFF"/>
<rect x="119" y="140" width="1" height="1" fill="#000"/>
<rect x="111" y="141" width="2" height="1" fill="#000"/>
<rect x="116" y="141" width="1" height="1" fill="#000"/>
<rect x="117" y="141" width="2" height="1" fill="#FFF"/>
<rect x="119" y="141" width="1" height="1" fill="#000"/>
<rect x="111" y="142" width="1" height="1" fill="#000"/>
<rect x="117" y="142" width="1" height="1" fill="#000"/>
<rect x="118" y="142" width="2" height="1" fill="#FFF"/>
<rect x="120" y="142" width="1" height="1" fill="#000"/>
<rect x="117" y="143" width="1" height="1" fill="#000"/>
<rect x="118" y="143" width="2" height="1" fill="#FFF"/>
<rect x="120" y="143" width="1" height="1" fill="#000"/>
<rect x="118" y="144" width="1" height="1" fill="#000"/>
<rect x="119" y="144" width="2" height="1" fill="#FFF"/>
<rect x="121" y="144" width="1" height="1" fill="#000"/>
<rect x="118" y="145" width="1" height="1" fill="#000"/>
<rect x="119" y="145" width="2" height="1" fill="#FFF"/>
<rect x="121" y="145" width="1" height="1" fill="#000"/>
<rect x="119" y="146" width="2" height="1" fill="#000"/>
<g id="txt" filter="url(#th)">
<text x="246" y="18" font-size="14" font-weight="bold" textLength="130" lengthAdjust="spacingAndGlyphs">Диспетчер Файлов</text>
<text x="12.5" y="36" font-size="14" font-weight="bold" textLength="37.5" lengthAdjust="spacingAndGlyphs">Файл</text>
<text x="66" y="36" font-size="14" font-weight="bold" textLength="35" lengthAdjust="spacingAndGlyphs">Диск</text>
<text x="117" y="36" font-size="14" font-weight="bold" textLength="51" lengthAdjust="spacingAndGlyphs">Дерево</text>
<text x="184.5" y="36" font-size="14" font-weight="bold" textLength="63" lengthAdjust="spacingAndGlyphs">Просмотр</text>
<text x="264.5" y="36" font-size="14" font-weight="bold" textLength="73" lengthAdjust="spacingAndGlyphs">Параметры</text>
<text x="355.5" y="36" font-size="14" font-weight="bold" textLength="32.5" lengthAdjust="spacingAndGlyphs">Окно</text>
<text x="404.5" y="36" font-size="14" font-weight="bold" textLength="55" lengthAdjust="spacingAndGlyphs">Справка</text>
<text x="39.6" y="59" font-size="12" textLength="67" lengthAdjust="spacingAndGlyphs">D: [D_DRIVE]</text>
<text transform="translate(33.5,85) scale(0.9,1)" font-size="12">c</text>
<text transform="translate(75.5,85) scale(0.9,1)" font-size="12">d</text>
<text transform="translate(117.5,85) scale(0.9,1)" font-size="12">z</text>
<text x="199" y="111" font-size="14" font-weight="bold" textLength="113" lengthAdjust="spacingAndGlyphs">D:\*.* - [D_DRIVE]</text>
<text y="129" font-size="12"><tspan x="30.5" textLength="9" lengthAdjust="spacingAndGlyphs">d:</tspan> <tspan x="39.6" textLength="4.6" lengthAdjust="spacingAndGlyphs">\</tspan></text>
<text transform="translate(49,145) scale(0.875,1)" font-size="12">data</text>
<text transform="translate(49,161) scale(0.875,1)" font-size="12">ec</text>
<text transform="translate(49,177) scale(0.875,1)" font-size="12">ej</text>
<text transform="translate(49,193) scale(0.875,1)" font-size="12">globes</text>
<text transform="translate(49,209) scale(0.875,1)" font-size="12">lc</text>
<text transform="translate(49,225) scale(0.875,1)" font-size="12">lj</text>
<text transform="translate(49,241) scale(0.875,1)" font-size="12">lt</text>
<g clip-path="url(#fl)">
<text transform="translate(206,129) scale(0.875,1)" font-size="12">data</text>
<text transform="translate(375.2,129) scale(0.885,1)" font-size="12" text-anchor="end">8.04.;2</text>
<text transform="translate(426.4,129) scale(0.9,1)" font-size="12" text-anchor="end">8:59:18</text>
<text transform="translate(206,145) scale(0.875,1)" font-size="12">ec</text>
<text transform="translate(375.2,145) scale(0.885,1)" font-size="12" text-anchor="end">8.04.;2</text>
<text transform="translate(426.4,145) scale(0.9,1)" font-size="12" text-anchor="end">8:59:18</text>
<text transform="translate(206,161) scale(0.875,1)" font-size="12">ej</text>
<text transform="translate(375.2,161) scale(0.885,1)" font-size="12" text-anchor="end">8.04.;2</text>
<text transform="translate(426.4,161) scale(0.9,1)" font-size="12" text-anchor="end">8:59:20</text>
<text transform="translate(206,177) scale(0.875,1)" font-size="12">globes</text>
<text transform="translate(375.2,177) scale(0.885,1)" font-size="12" text-anchor="end">8.04.;2</text>
<text transform="translate(426.4,177) scale(0.9,1)" font-size="12" text-anchor="end">8:59:26</text>
<text transform="translate(206,193) scale(0.875,1)" font-size="12">lc</text>
<text transform="translate(375.2,193) scale(0.885,1)" font-size="12" text-anchor="end">8.04.;2</text>
<text transform="translate(426.4,193) scale(0.9,1)" font-size="12" text-anchor="end">8:59:32</text>
<text transform="translate(206,209) scale(0.875,1)" font-size="12">lj</text>
<text transform="translate(375.2,209) scale(0.885,1)" font-size="12" text-anchor="end">8.04.;2</text>
<text transform="translate(426.4,209) scale(0.9,1)" font-size="12" text-anchor="end">8:59:32</text>
<text transform="translate(206,225) scale(0.875,1)" font-size="12">lt</text>
<text transform="translate(375.2,225) scale(0.885,1)" font-size="12" text-anchor="end">8.04.;2</text>
<text transform="translate(426.4,225) scale(0.9,1)" font-size="12" text-anchor="end">8:59:36</text>
<text transform="translate(206,241) scale(0.875,1)" font-size="12">ace.dss</text>
<text transform="translate(323.6,241) scale(0.89,1)" font-size="12" text-anchor="end">761</text>
<text transform="translate(375.2,241) scale(0.885,1)" font-size="12" text-anchor="end">8.12.93</text>
<text transform="translate(426.4,241) scale(0.9,1)" font-size="12" text-anchor="end">0:51:26</text>
<text transform="translate(459.5,241) scale(0.875,1)" font-size="12">a</text>
<text transform="translate(206,257) scale(0.875,1)" font-size="12">ace_x.dss</text>
<text transform="translate(323.6,257) scale(0.89,1)" font-size="12" text-anchor="end">761</text>
<text transform="translate(375.2,257) scale(0.885,1)" font-size="12" text-anchor="end">8.12.93</text>
<text transform="translate(426.4,257) scale(0.9,1)" font-size="12" text-anchor="end">0:50:40</text>
<text transform="translate(459.5,257) scale(0.875,1)" font-size="12">a</text>
<text transform="translate(206,273) scale(0.875,1)" font-size="12">bwcc.dll</text>
<text transform="translate(323.6,273) scale(0.89,1)" font-size="12" text-anchor="end">130224</text>
<text transform="translate(375.2,273) scale(0.885,1)" font-size="12" text-anchor="end">10.06.92</text>
<text transform="translate(426.4,273) scale(0.9,1)" font-size="12" text-anchor="end">13:10:00</text>
<text transform="translate(459.5,273) scale(0.875,1)" font-size="12">a</text>
<text transform="translate(206,289) scale(0.875,1)" font-size="12">dmres.dll</text>
<text transform="translate(323.6,289) scale(0.89,1)" font-size="12" text-anchor="end">19858432</text>
<text transform="translate(375.2,289) scale(0.885,1)" font-size="12" text-anchor="end">10.12.93</text>
<text transform="translate(426.4,289) scale(0.9,1)" font-size="12" text-anchor="end">4:04:52</text>
<text transform="translate(459.5,289) scale(0.875,1)" font-size="12">a</text>
<text transform="translate(206,305) scale(0.875,1)" font-size="12">ds.exe</text>
<text transform="translate(323.6,305) scale(0.89,1)" font-size="12" text-anchor="end">415024</text>
<text transform="translate(375.2,305) scale(0.885,1)" font-size="12" text-anchor="end">14.12.93</text>
<text transform="translate(426.4,305) scale(0.9,1)" font-size="12" text-anchor="end">1:15:50</text>
<text transform="translate(459.5,305) scale(0.875,1)" font-size="12">a</text>
<text transform="translate(206,321) scale(0.875,1)" font-size="12">ec.dll</text>
<text transform="translate(323.6,321) scale(0.89,1)" font-size="12" text-anchor="end">29282895</text>
<text transform="translate(375.2,321) scale(0.885,1)" font-size="12" text-anchor="end">10.12.93</text>
<text transform="translate(426.4,321) scale(0.9,1)" font-size="12" text-anchor="end">3:05:10</text>
<text transform="translate(459.5,321) scale(0.875,1)" font-size="12">a</text>
</g>
<text y="469" font-size="14"><tspan x="16" textLength="11" lengthAdjust="spacingAndGlyphs">D:</tspan> <tspan x="32" textLength="19.5" lengthAdjust="spacingAndGlyphs">250</tspan> <tspan x="56" textLength="18" lengthAdjust="spacingAndGlyphs">Мб</tspan> <tspan x="78" textLength="34.5" lengthAdjust="spacingAndGlyphs">своб.,</tspan> <tspan x="118" textLength="36" lengthAdjust="spacingAndGlyphs">всего</tspan> <tspan x="157.6" textLength="19.5" lengthAdjust="spacingAndGlyphs">511</tspan> <tspan x="182" textLength="17.6" lengthAdjust="spacingAndGlyphs">Мб</tspan></text>
<text y="469" font-size="14"><tspan x="231.8" textLength="45.8" lengthAdjust="spacingAndGlyphs">Файлы:</tspan> <tspan x="281" textLength="12.5" lengthAdjust="spacingAndGlyphs">31</tspan> <tspan x="299" textLength="23.5" lengthAdjust="spacingAndGlyphs">(160</tspan> <tspan x="327" textLength="20.5" lengthAdjust="spacingAndGlyphs">Мб)</tspan></text>
</g>
</svg>
</body></html>
